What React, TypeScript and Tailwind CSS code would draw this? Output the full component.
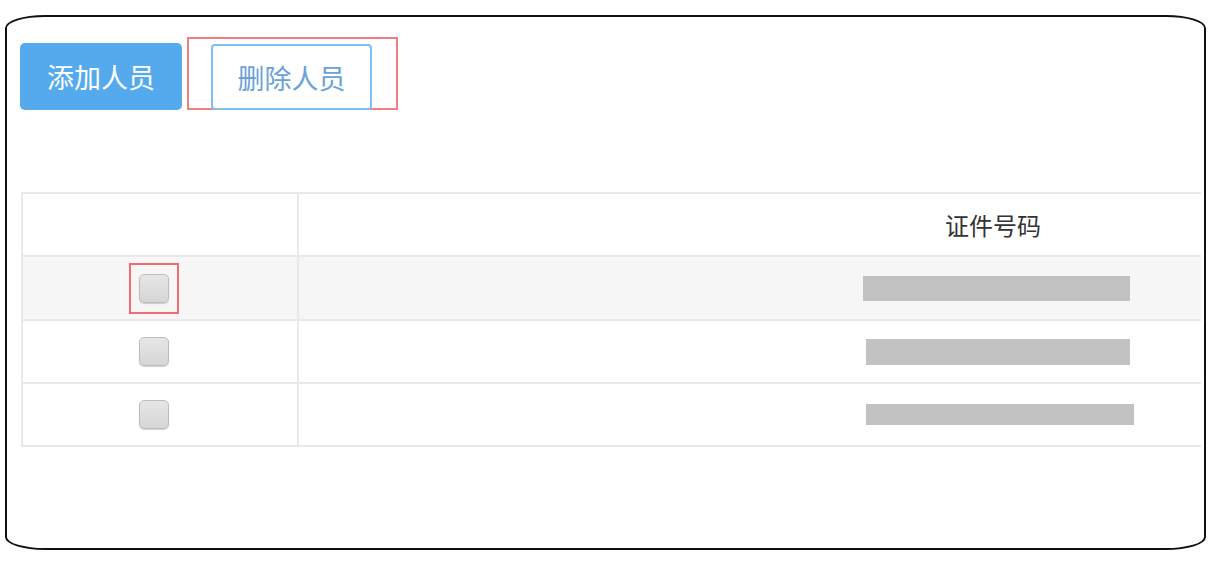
const rows = [
  { id: 1, active: true, bar: { pl: "pl-[564px]", w: "w-[267px]", h: "h-[25px]" } },
  { id: 2, active: false, bar: { pl: "pl-[567px]", w: "w-[264px]", h: "h-[26px]" } },
  { id: 3, active: false, bar: { pl: "pl-[567px]", w: "w-[268px]", h: "h-[21px]" } },
];

function Checkbox() {
  return (
    <span className="block h-[29px] w-[30px] rounded-[5px] border border-[#bdbdbd] bg-gradient-to-b from-[#e6e6e6] to-[#d6d6d6] shadow-[0_1px_1px_rgba(0,0,0,0.18)]" />
  );
}

export default function App() {
  return (
    <div
      className="h-[564px] w-[1215px] bg-white pl-[5px] pt-[15px]"
      style={{ fontFamily: '"Noto Sans CJK SC", "Noto Sans", sans-serif' }}
    >
      <div className="h-[535px] w-[1201px] rounded-[40px/13px] border-2 border-[#111]">
        <div className="ml-[13px] mt-[20px] flex items-end gap-[5px]">
          <button
            type="button"
            className="flex h-[67px] w-[162px] items-center justify-center rounded-[5px] bg-[#55aaee] text-[27px] leading-none text-white"
          >
            添加人员
          </button>
          <div className="border-2 border-[#f07f84] pl-[22px] pr-[24px] pt-[5px]">
            <button
              type="button"
              className="-mb-[2px] flex h-[66px] w-[161px] items-center justify-center rounded-[4px] border-2 border-[#7cc0f4] bg-white text-[27px] leading-none text-[#6aa2d8]"
            >
              删除人员
            </button>
          </div>
        </div>

        <div className="ml-[14px] mt-[82px] w-[1180px] border-l-2 border-t-2 border-[#e9e9e9]">
          <div className="grid h-[63px] grid-cols-[276px_1fr] border-b-2 border-[#e9e9e9]">
            <div className="border-r-2 border-[#e9e9e9]" />
            <div className="flex items-center pl-[646px] text-[24px] leading-none text-[#333]">
              证件号码
            </div>
          </div>
          {rows.map((row) => (
            <div
              key={row.id}
              className={
                row.active
                  ? "grid h-[64px] grid-cols-[276px_1fr] border-b-2 border-[#e9e9e9] bg-[#f6f6f6]"
                  : "grid h-[63px] grid-cols-[276px_1fr] border-b-2 border-[#e9e9e9] bg-white"
              }
            >
              <div
                className={
                  row.active
                    ? "flex items-center border-r-2 border-[#e9e9e9] pl-[106px]"
                    : "flex items-center border-r-2 border-[#e9e9e9] pl-[116px]"
                }
              >
                {row.active ? (
                  <span className="border-2 border-[#f06b72] px-[8px] py-[9px]">
                    <Checkbox />
                  </span>
                ) : (
                  <Checkbox />
                )}
              </div>
              <div className={`flex items-center ${row.bar.pl}`}>
                <span className={`block bg-[#c2c2c2] ${row.bar.w} ${row.bar.h}`} />
              </div>
            </div>
          ))}
        </div>
      </div>
    </div>
  );
}
